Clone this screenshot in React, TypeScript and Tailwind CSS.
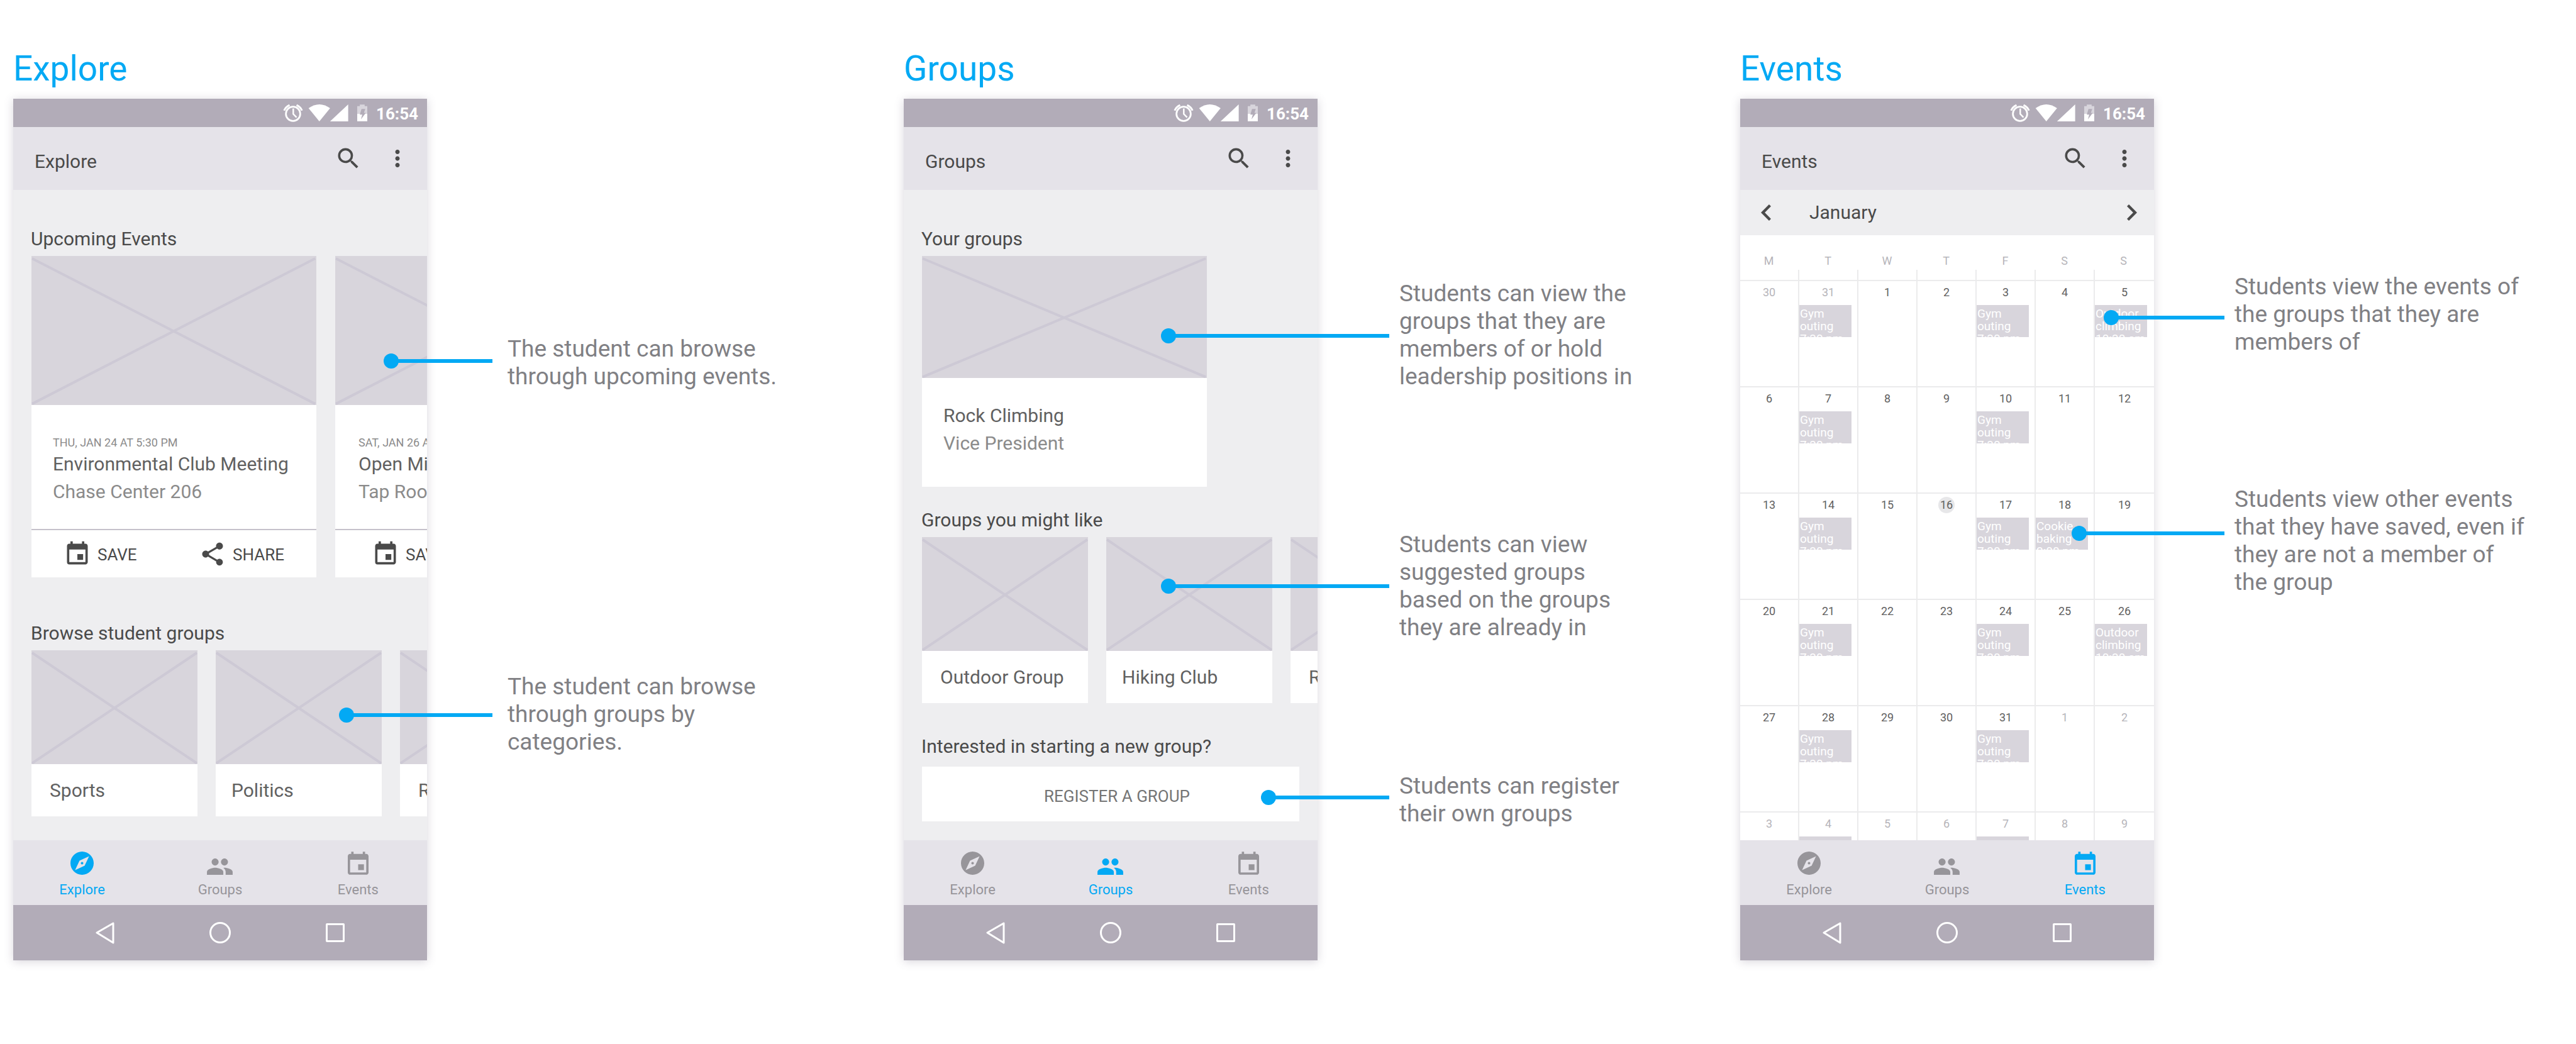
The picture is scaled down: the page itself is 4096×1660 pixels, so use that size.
import React from "react";
import { MdEvent, MdMoreVert, MdSearch, MdShare } from "react-icons/md";

type Tab = "Explore" | "Groups" | "Events";

/* ---------- icons ---------- */

function AlarmIcon() {
  return (
    <svg viewBox="38 46 104 94" className="mr-2 h-[29px] w-8" fill="none" stroke="#fff" aria-hidden="true">
      <circle cx="90" cy="98" r="37" strokeWidth="9" />
      <path d="M91 70V99L108 116" strokeWidth="8" />
      <path d="M44 81Q51 63 72 53" strokeWidth="10" />
      <path d="M136 81Q129 63 108 53" strokeWidth="10" />
    </svg>
  );
}

function SignalIcons() {
  return (
    <svg viewBox="170 48 211 90" className="mr-[14px] h-[27px] w-16" fill="#fff" aria-hidden="true">
      <path d="M171 68Q228 28 285 68L228 138Z" />
      <path d="M285 138L381 48V138Z" />
    </svg>
  );
}

function BatteryIcon() {
  return (
    <svg viewBox="429 48 54 90" className="mr-[14px] h-[27px] w-4" aria-hidden="true">
      <path d="M429 57H443V48H469V57H483V98H429Z" fill="#d8d5dc" />
      <path d="M429 98H483V138H429Z" fill="#fff" />
      <path d="M452 72H472L465 93H475L449 128L456 102H443Z" fill="#b2acb8" />
    </svg>
  );
}

function ExploreIcon() {
  return (
    <svg viewBox="2 2 20 20" className="size-[37px]" fill="currentColor" aria-hidden="true">
      <path d="M12 10.9c-.61 0-1.1.49-1.1 1.1s.49 1.1 1.1 1.1c.61 0 1.1-.49 1.1-1.1s-.49-1.1-1.1-1.1zM12 2C6.48 2 2 6.48 2 12s4.48 10 10 10 10-4.48 10-10S17.52 2 12 2zm2.19 12.19L6 18l3.81-8.19L18 6l-3.81 8.19z" />
    </svg>
  );
}

function GroupsIcon() {
  return (
    <svg viewBox="1 5 22 14" className="h-[26px] w-[41px]" fill="currentColor" aria-hidden="true">
      <path d="M16 11c1.66 0 2.99-1.34 2.99-3S17.66 5 16 5c-1.66 0-3 1.34-3 3s1.34 3 3 3zm-8 0c1.66 0 2.99-1.34 2.99-3S9.66 5 8 5C6.34 5 5 6.34 5 8s1.34 3 3 3zm0 2c-2.33 0-7 1.17-7 3.5V19h14v-2.5c0-2.33-4.67-3.5-7-3.5zm8 0c-.29 0-.62.02-.97.05 1.16.84 1.97 1.97 1.97 3.45V19h6v-2.5c0-2.33-4.67-3.5-7-3.5z" />
    </svg>
  );
}

function EventsIcon() {
  return (
    <svg viewBox="3 1 18 20" className="h-[37px] w-[33px]" fill="currentColor" aria-hidden="true">
      <path d="M17 12h-5v5h5v-5zM16 1v2H8V1H6v2H5c-1.11 0-1.99.9-1.99 2L3 19c0 1.1.89 2 2 2h14c1.1 0 2-.9 2-2V5c0-1.1-.9-2-2-2h-1V1h-2zm3 18H5V8h14v11z" />
    </svg>
  );
}

/* ---------- phone frame ---------- */

function StatusBar() {
  return (
    <div className="flex h-[45px] items-center justify-end bg-[#b2acb8] pr-[14px] text-white">
      <AlarmIcon />
      <SignalIcons />
      <BatteryIcon />
      <span className="pt-0.5 text-[26px] leading-7 font-bold">16:54</span>
    </div>
  );
}

function AppBar({ title }: { title: string }) {
  return (
    <header className="flex h-[100px] items-center bg-[#e5e3e9] pr-[26px] pl-[34px] text-[#4a4a4a]">
      <h2 className="flex-1 pt-2.5 text-[30px] leading-9">{title}</h2>
      <button type="button" aria-label="Search" className="mr-[35px]">
        <MdSearch className="size-11" />
      </button>
      <button type="button" aria-label="More options">
        <MdMoreVert className="size-[42px]" />
      </button>
    </header>
  );
}

const tabs: { name: Tab; icon: React.ReactNode }[] = [
  { name: "Explore", icon: <ExploreIcon /> },
  { name: "Groups", icon: <GroupsIcon /> },
  { name: "Events", icon: <EventsIcon /> },
];

function TabBar({ active }: { active: Tab }) {
  return (
    <nav className="grid h-[103px] grid-cols-3 bg-[#e5e3e9] pt-[18px]">
      {tabs.map((t) => (
        <a
          key={t.name}
          href={"#" + t.name.toLowerCase()}
          className={t.name === active ? "flex flex-col items-center text-[#03a9f4]" : "flex flex-col items-center text-[#97959a]"}
        >
          <span className="flex h-[37px] items-end">{t.icon}</span>
          <span className="mt-[10px] text-[22px] leading-7">{t.name}</span>
        </a>
      ))}
    </nav>
  );
}

function SystemBar() {
  return (
    <div className="h-[88px] bg-[#b2acb8]">
      <div className="mx-auto grid h-full w-5/6 grid-cols-3 place-items-center text-white">
        <button type="button" aria-label="Back">
          <svg viewBox="0 0 30 35" className="h-[35px] w-[30px]" fill="none" stroke="currentColor" strokeWidth="3" strokeLinejoin="round">
            <path d="M28 2V33L2 17Z" />
          </svg>
        </button>
        <button type="button" aria-label="Home" className="size-[34px] rounded-full border-3 border-white" />
        <button type="button" aria-label="Recent apps" className="size-[30px] rounded-xs border-3 border-white" />
      </div>
    </div>
  );
}

function Phone({ tab, children }: { tab: Tab; children: React.ReactNode }) {
  return (
    <div className="min-w-0 self-start bg-[#eeeef0] shadow-[0_2px_14px_rgba(90,80,110,0.24)]">
      <StatusBar />
      <AppBar title={tab} />
      <div className="h-[1034px] overflow-hidden">{children}</div>
      <TabBar active={tab} />
      <SystemBar />
    </div>
  );
}

/* ---------- cards ---------- */

function Placeholder({ className }: { className: string }) {
  return (
    <svg className={"block w-full bg-[#d8d5dc] " + className} stroke="#cdc9d5" strokeWidth="4" aria-hidden="true">
      <line x1="1" y1="4" x2="99.6%" y2="99.2%" />
      <line x1="1" y1="99.2%" x2="99.6%" y2="4" />
    </svg>
  );
}

function Heading({ children }: { children: React.ReactNode }) {
  return <h3 className="pt-px pl-7 text-[30px] leading-9 text-[#4a4a4a]">{children}</h3>;
}

function EventCard(p: { when: string; name: string; place: string; textInset: string; actionInset: string }) {
  return (
    <article className="w-[453px] shrink-0 bg-white">
      <Placeholder className="h-[237px]" />
      <div className={"pt-12 pb-[37px] whitespace-nowrap " + p.textInset}>
        <p className="text-[18px] leading-6 text-[#8b8b8b]">{p.when}</p>
        <h4 className="text-[30px] leading-11 text-[#616161]">{p.name}</h4>
        <p className="text-[30px] leading-11 text-[#8b8b8b]">{p.place}</p>
      </div>
      <div className={"flex h-[77px] items-center justify-between border-t-2 border-[#c5c1cb] text-[26px] leading-8 text-[#4a4a4a] " + p.actionInset}>
        <button type="button" className="flex items-center gap-[10px]">
          <MdEvent className="size-11" />
          <span className="pt-0.5">SAVE</span>
        </button>
        <button type="button" className="flex items-center gap-[10px]">
          <MdShare className="size-11" />
          <span className="pt-0.5">SHARE</span>
        </button>
      </div>
    </article>
  );
}

function GroupCards({ names }: { names: string[] }) {
  return (
    <div className="mt-[9px] flex gap-[29px] pl-[29px]">
      {names.map((n, i) => (
        <article key={n} className="w-[264px] shrink-0 bg-white text-[30px] text-[#616161]">
          <Placeholder className="h-[181px]" />
          <h4 className={i === 1 ? "flex h-[83px] items-center pl-[25px]" : "flex h-[83px] items-center pl-[29px]"}>{n}</h4>
        </article>
      ))}
    </div>
  );
}

/* ---------- screens ---------- */

function ExploreScreen() {
  return (
    <div className="pt-[59px]">
      <Heading>Upcoming Events</Heading>
      <div className="mt-[9px] mb-[70px] flex gap-[30px] pl-[29px]">
        <EventCard when="THU, JAN 24 AT 5:30 PM" name="Environmental Club Meeting" place="Chase Center 206" textInset="pl-[34px]" actionInset="px-[51px]" />
        <EventCard when="SAT, JAN 26 AT 8:00 PM" name="Open Mic Night" place="Tap Room" textInset="pl-[37px]" actionInset="px-[58px]" />
      </div>
      <Heading>Browse student groups</Heading>
      <GroupCards names={["Sports", "Politics", "Religion"]} />
    </div>
  );
}

function GroupsScreen() {
  return (
    <div className="pt-[59px]">
      <Heading>Your groups</Heading>
      <article className="mt-[9px] mb-[34px] ml-[29px] w-[453px] bg-white">
        <Placeholder className="h-[194px]" />
        <div className="pt-[38px] pb-[47px] pl-[34px] text-[30px] leading-11">
          <h4 className="text-[#616161]">Rock Climbing</h4>
          <p className="text-[#8b8b8b]">Vice President</p>
        </div>
      </article>
      <Heading>Groups you might like</Heading>
      <GroupCards names={["Outdoor Group", "Hiking Club", "Running"]} />
      <div className="mt-[50px]">
        <Heading>Interested in starting a new group?</Heading>
      </div>
      <div className="mt-[14px] px-[29px]">
        <button type="button" className="h-[87px] w-full bg-white pt-1.5 pl-5 text-[26px] leading-8 text-[#757575]">
          REGISTER A GROUP
        </button>
      </div>
    </div>
  );
}

const weekdays = ["M", "T", "W", "T", "F", "S", "S"];

const gym = ["Gym", "outing", "7:30 pm"];
const climbing = ["Outdoor", "climbing", "10:30 am"];
const baking = ["Cookie", "baking", "2:00 pm"];

const bookings: Record<number, string[]> = {
  1: gym, 4: gym, 6: climbing,
  8: gym, 11: gym,
  15: gym, 18: gym, 19: baking,
  22: gym, 25: gym, 27: climbing,
  29: gym, 32: gym,
  36: gym, 39: gym,
};

function dayOf(index: number) {
  if (index < 2) return 30 + index;
  return index < 33 ? index - 1 : index - 32;
}

function DayCell({ index }: { index: number }) {
  const inMonth = index >= 2 && index < 33;
  const today = index === 17;
  const booking = bookings[index];
  return (
    <td className="h-[169px] border-t-2 border-r-2 border-[#ebebec] p-0 pt-[5px] align-top last:border-r-0">
      <div
        className={
          today
            ? "mx-auto size-[26px] rounded-full bg-[#e7e7e9] text-center text-[18px] leading-[26px] text-[#616161]"
            : inMonth
              ? "mx-auto size-[26px] text-center text-[18px] leading-[26px] text-[#616161]"
              : "mx-auto size-[26px] text-center text-[18px] leading-[26px] text-[#b6b5ba]"
        }
      >
        {dayOf(index)}
      </div>
      {booking && (
        <div className="mt-[7px] h-[51px] w-[83px] overflow-hidden bg-[#d8d5dc] pt-1 pl-px text-[19px] leading-5 whitespace-nowrap text-white">
          {booking.map((line) => (
            <p key={line}>{line}</p>
          ))}
        </div>
      )}
    </td>
  );
}

function EventsScreen() {
  return (
    <div>
      <div className="flex h-[72px] items-center pr-[27px] pl-[33px] text-[#4a4a4a]">
        <button type="button" aria-label="Previous month">
          <svg viewBox="8 6 7.41 12" className="h-[26px] w-4" fill="currentColor">
            <path d="M15.41 7.41L14 6l-6 6 6 6 1.41-1.41L10.83 12z" />
          </svg>
        </button>
        <h3 className="ml-[61px] flex-1 text-[30px] leading-9">January</h3>
        <button type="button" aria-label="Next month">
          <svg viewBox="8.59 6 7.41 12" className="h-[26px] w-4" fill="currentColor">
            <path d="M10 6L8.59 7.41 13.17 12l-4.58 4.59L10 18l6-6z" />
          </svg>
        </button>
      </div>
      <table className="w-full table-fixed border-separate border-spacing-0 bg-white">
        <thead>
          <tr>
            {weekdays.map((d, i) => (
              <th key={i} className="relative h-[71px] p-0 pr-[3px] pb-[18px] align-bottom text-[18px] leading-6 font-normal text-[#b6b5ba]">
                {d}
                {i < 6 && <span className="absolute right-0 bottom-0 h-4 w-0.5 bg-[#ebebec]" />}
              </th>
            ))}
          </tr>
        </thead>
        <tbody>
          {[0, 1, 2, 3, 4, 5].map((w) => (
            <tr key={w}>
              {weekdays.map((_, d) => (
                <DayCell key={d} index={w * 7 + d} />
              ))}
            </tr>
          ))}
        </tbody>
      </table>
    </div>
  );
}

/* ---------- annotations ---------- */

function Note({ lines, spacing, pointer }: { lines: string[]; spacing: string; pointer: string }) {
  return (
    <p className={"relative text-[37px] leading-11 whitespace-nowrap text-[#808084] " + spacing}>
      <span className={"absolute flex h-6 items-center " + pointer} aria-hidden="true">
        <span className="size-6 shrink-0 rounded-full bg-[#03a9f4]" />
        <span className="-ml-1 h-1.5 flex-1 bg-[#03a9f4]" />
      </span>
      {lines.map((l) => (
        <span key={l} className="block">
          {l}
        </span>
      ))}
    </p>
  );
}

function Column({ title, columns, notes, children }: { title: Tab; columns: string; notes: React.ReactNode; children: React.ReactNode }) {
  return (
    <section className="min-w-0">
      <h1 className="mb-4 text-[55px] leading-[64px] text-[#03a9f4]">{title}</h1>
      <div className={"grid " + columns}>
        <Phone tab={title}>{children}</Phone>
        <aside className="min-w-0">{notes}</aside>
      </div>
    </section>
  );
}

export default function App() {
  return (
    <main className="grid min-h-screen grid-cols-[1416fr_1330fr_1308fr] bg-white px-[21px] pt-[77px] font-['Roboto',sans-serif]">
      <Column
        title="Explore"
        columns="grid-cols-[658fr_758fr]"
        notes={
          <div className="pl-32">
            <Note spacing="mt-[376px]" pointer="top-[29px] right-full mr-6 w-[173px]" lines={["The student can browse", "through upcoming events."]} />
            <Note spacing="mt-[449px]" pointer="top-[55px] right-full mr-6 w-[244px]" lines={["The student can browse", "through groups by", "categories."]} />
          </div>
        }
      >
        <ExploreScreen />
      </Column>
      <Column
        title="Groups"
        columns="grid-cols-[658fr_672fr]"
        notes={
          <div className="pl-[130px]">
            <Note
              spacing="mt-[288px]"
              pointer="top-[77px] right-full mr-4 w-[363px]"
              lines={["Students can view the", "groups that they are", "members of or hold", "leadership positions in"]}
            />
            <Note
              spacing="mt-[223px]"
              pointer="top-[76px] right-full mr-4 w-[363px]"
              lines={["Students can view", "suggested groups", "based on the groups", "they are already in"]}
            />
            <Note spacing="mt-[208px]" pointer="top-[28px] right-full mr-4 w-[204px]" lines={["Students can register", "their own groups"]} />
          </div>
        }
      >
        <GroupsScreen />
      </Column>
      <Column
        title="Events"
        columns="grid-cols-[658fr_650fr]"
        notes={
          <div className="pl-32">
            <Note spacing="mt-[277px]" pointer="top-[59px] right-full mr-4 w-[192px]" lines={["Students view the events of", "the groups that they are", "members of"]} />
            <Note
              spacing="mt-[206px]"
              pointer="top-[64px] right-full mr-4 w-[243px]"
              lines={["Students view other events", "that they have saved, even if", "they are not a member of", "the group"]}
            />
          </div>
        }
      >
        <EventsScreen />
      </Column>
    </main>
  );
}
